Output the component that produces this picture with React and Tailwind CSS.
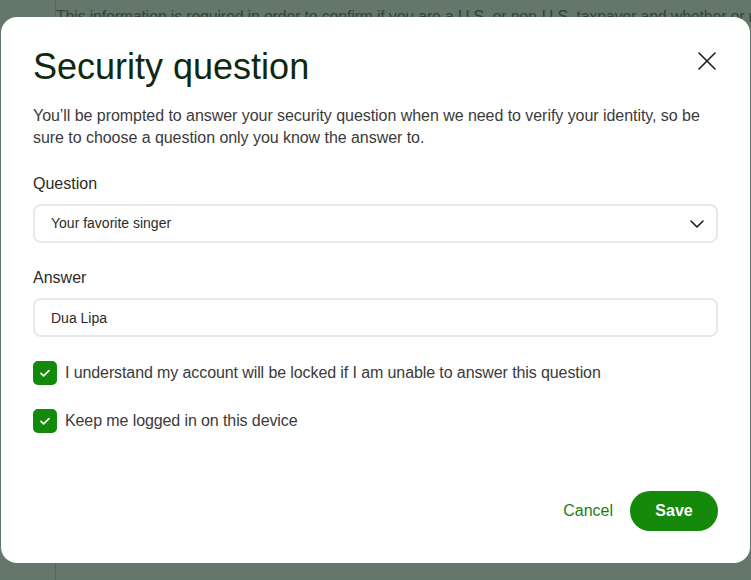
import { useState } from "react";

const Check = ({ checked, onChange, children }) => (
  <label className="flex cursor-pointer items-center gap-2">
    <button
      type="button"
      role="checkbox"
      aria-checked={checked}
      onClick={onChange}
      className={`flex h-6 w-6 shrink-0 items-center justify-center rounded-[5px] ${checked ? "bg-[#148a0c]" : "border-2 border-[#c9c9c9] bg-white"}`}
    >
      {checked && (
        <svg viewBox="0 0 24 24" className="h-4 w-4" fill="none" stroke="white" strokeWidth="2.6" strokeLinecap="round" strokeLinejoin="round">
          <path d="M6 12.5l4 3.8L18 8.5" />
        </svg>
      )}
    </button>
    <span className="text-[16px] leading-[24px] tracking-[-0.1px] text-[#3a3a3a]">{children}</span>
  </label>
);

const App = () => {
  const [question, setQuestion] = useState("Your favorite singer");
  const [answer, setAnswer] = useState("Dua Lipa");
  const [understand, setUnderstand] = useState(true);
  const [keepLogged, setKeepLogged] = useState(true);

  return (
    <div className="relative flex h-[580px] w-[751px] overflow-hidden bg-[#65776a] font-['Liberation_Sans',Arial,sans-serif]">
      {/* page behind the overlay */}
      <div className="w-[56px] shrink-0 border-r border-[#55665a]" />
      <p className="whitespace-nowrap pt-[5px] text-[16px] leading-[24px] tracking-[-0.2px] text-[#34443a]">
        This information is required in order to confirm if you are a U.S. or non-U.S. taxpayer and whether or not
      </p>

      {/* dialog */}
      <div className="absolute left-[1px] top-[17px] flex h-[546px] w-[749px] flex-col rounded-2xl bg-white px-8 pb-8 pt-[28px]">
        <div className="flex items-start justify-between">
          <h1 className="text-[36px] leading-[44px] text-[#0d2a10]">Security question</h1>
          <button type="button" aria-label="Close" className="mr-[2px] mt-[7px] text-[#1b1b1b]">
            <svg viewBox="0 0 18 18" className="h-[18px] w-[18px]" fill="none" stroke="currentColor" strokeWidth="1.6" strokeLinecap="round">
              <path d="M1 1l16 16M17 1L1 17" />
            </svg>
          </button>
        </div>

        <p className="mt-[16px] text-[16px] leading-[22px] tracking-[-0.05px] text-[#3b3b3b]">
          You’ll be prompted to answer your security question when we need to verify your identity, so be sure to choose a question only you know the answer to.
        </p>

        <label className="mt-[24px] text-[16px] leading-[22px] text-[#2b2b2b]">Question</label>
        <div className="relative mt-[9px]">
          <select
            value={question}
            onChange={(event) => setQuestion(event.target.value)}
            className="h-[39px] w-full appearance-none rounded-lg border-2 border-[#e8e8e8] bg-white pl-[16px] text-[14px] text-[#2b2b2b] outline-none"
          >
            <option>Your favorite singer</option>
            <option>Your first pet's name</option>
            <option>The city you were born in</option>
          </select>
          <svg viewBox="0 0 14 8" className="pointer-events-none absolute right-[14px] top-[16px] h-[8px] w-[14px]" fill="none" stroke="#1f1f1f" strokeWidth="1.6" strokeLinecap="round" strokeLinejoin="round">
            <path d="M1 1l6 6 6-6" />
          </svg>
        </div>

        <label className="mt-[24px] text-[16px] leading-[22px] text-[#2b2b2b]">Answer</label>
        <input
          value={answer}
          onChange={(event) => setAnswer(event.target.value)}
          className="mt-[9px] h-[39px] w-full rounded-lg border-2 border-[#e8e8e8] bg-white pl-[16px] text-[14px] text-[#2b2b2b] outline-none"
        />

        <div className="mt-[24px] flex flex-col gap-[24px]">
          <Check checked={understand} onChange={() => setUnderstand((prev) => !prev)}>
            I understand my account will be locked if I am unable to answer this question
          </Check>
          <Check checked={keepLogged} onChange={() => setKeepLogged((prev) => !prev)}>
            Keep me logged in on this device
          </Check>
        </div>

        <div className="mt-auto flex items-center justify-end gap-[17px]">
          <button type="button" className="text-[16px] font-medium text-[#1a7f14]">
            Cancel
          </button>
          <button type="button" className="h-10 w-[88px] rounded-full bg-[#14890a] text-[16px] font-bold text-white">
            Save
          </button>
        </div>
      </div>
    </div>
  );
};

export default App;
